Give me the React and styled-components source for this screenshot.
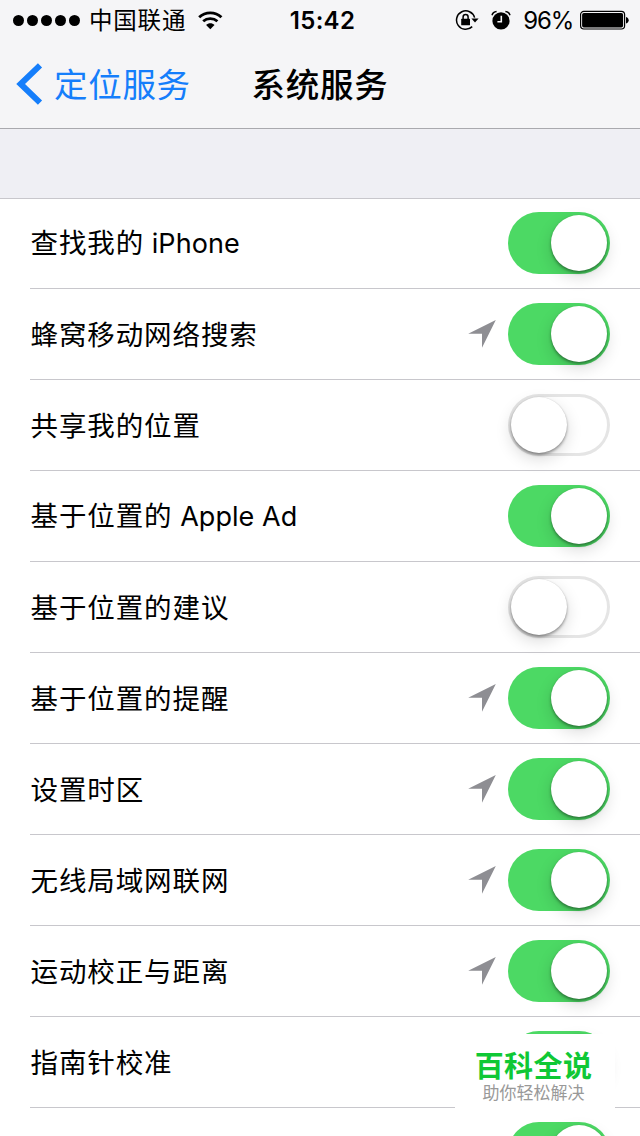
import React from "react";
import styled, { createGlobalStyle, css } from "styled-components";

const Global = createGlobalStyle`
  * { box-sizing: border-box; }
  html, body { margin: 0; padding: 0; }
  body {
    width: 640px;
    height: 1136px;
    overflow: hidden;
    background: #fff;
    color: #000;
    font-family: Inter, "Noto Sans CJK SC", sans-serif;
  }
`;

const Screen = styled.div`
  position: relative;
  width: 640px;
  height: 1136px;
  overflow: hidden;
  background: #efeff4;
`;

const Header = styled.header`
  height: 129px;
  background: #f5f5f7;
  border-bottom: 1px solid #a9a9ae;
`;

const StatusBar = styled.div`
  display: grid;
  grid-template-columns: 1fr auto 1fr;
  align-items: center;
  height: 40px;
  padding: 0 11px 0 13px;
`;

const StatusGroup = styled.div`
  display: flex;
  align-items: center;
  justify-content: ${(p) => (p.$end ? "flex-end" : "flex-start")};
`;

const Signal = styled.div`
  display: flex;
  gap: 3px;
  margin-right: 9px;
`;

const Dot = styled.i`
  width: 11px;
  height: 11px;
  border-radius: 50%;
  background: #000;
`;

const Carrier = styled.span`
  font-size: 23.5px;
  line-height: 38px;
  padding-top: 2px;
  letter-spacing: 0.8px;
  margin-right: 12px;
`;

const Clock = styled.span`
  font-size: 24px;
  font-weight: 600;
  line-height: 38px;
  padding: 2px 0 0 3px;
  letter-spacing: 0.3px;
`;

const Percent = styled.span`
  font-size: 24px;
  line-height: 38px;
  padding-top: 1px;
  letter-spacing: -1.2px;
  margin: 0 7px 0 12px;
`;

const Gap = styled.span`
  width: 12px;
`;

const NavBar = styled.nav`
  display: grid;
  grid-template-columns: 1fr auto 1fr;
  align-items: center;
  height: 88px;
  padding: 0 16px;
`;

const Back = styled.a`
  display: flex;
  align-items: center;
  gap: 11px;
  color: #157efb;
  font-size: 33.5px;
  line-height: 50px;
  letter-spacing: 0.7px;
`;

const BackText = styled.span`
  padding-top: 2px;
`;

const Title = styled.h1`
  margin: 0;
  padding-top: 2px;
  font-size: 33.5px;
  font-weight: 500;
  line-height: 50px;
  letter-spacing: 0.7px;
`;

const List = styled.ul`
  list-style: none;
  margin: 69px 0 0;
  padding: 0 0 0 30px;
  height: 938px;
  background: #fff;
  box-shadow: inset 0 1px #c8c7cc;
`;

const Row = styled.li`
  display: flex;
  align-items: center;
  height: 91px;
  padding-right: 30px;
  border-bottom: 1px solid #c8c7cc;
`;

const Label = styled.span`
  flex: 1;
  padding: 1px 0 0 0.5px;
  font-size: 27.5px;
  line-height: 40px;
  letter-spacing: 0.9px;
  white-space: pre;
`;

const Latin = styled.span`
  font-size: 27px;
  letter-spacing: 0.05px;
`;

const Track = styled.span`
  display: flex;
  align-items: center;
  width: 102px;
  height: 62px;
  margin-left: 12px;
  padding: 0 3px;
  border-radius: 31px;
  ${(p) =>
    p.$on
      ? css`
          justify-content: flex-end;
          background: #4cd964;
        `
      : css`
          justify-content: flex-start;
          background: #fff;
          box-shadow: inset 0 0 0 3px #e5e5e5;
        `}
`;

const Knob = styled.span`
  width: 56px;
  height: 56px;
  border-radius: 50%;
  background: #fff;
  box-shadow: 0 6px 16px rgba(0, 0, 0, 0.15), 0 2px 3px rgba(0, 0, 0, 0.36),
    0 0 1px rgba(0, 0, 0, 0.15);
`;

const Watermark = styled.aside`
  position: absolute;
  left: 455px;
  top: 1034px;
  width: 160px;
  height: 77px;
  padding: 16px 3px 0 0;
  background: #fff;
  text-align: center;
`;

const Brand = styled.div`
  color: #0fc835;
  font-size: 29px;
  font-weight: 700;
  line-height: 34px;
  letter-spacing: 0.4px;
`;

const Slogan = styled.div`
  color: #999;
  font-size: 17px;
  line-height: 19px;
`;

const Wifi = () => (
  <svg width="25" height="20" viewBox="0 0 25 20" fill="none" stroke="#000">
    <path d="M1.2 7.2C7.3 1.4 17.3 1.4 23.4 7.2" strokeWidth="2.9" />
    <path d="M5.2 11.3C9.1 7.8 15.5 7.8 19.4 11.3" strokeWidth="2.8" />
    <path d="M12.3 19.2l-4.2-4.3c2.3-2.1 6.1-2.1 8.4 0z" fill="#000" stroke="none" />
  </svg>
);

const RotationLock = () => (
  <svg width="24" height="22" viewBox="0 0 24 22" fill="none" stroke="#000">
    <path d="M19.6 8.6A9.2 9.2 0 1 0 17.2 17.6" strokeWidth="1.5" />
    <path d="M16.4 9.6h7.2l-3.6 4z" fill="#000" stroke="none" />
    <rect x="6.2" y="9.8" width="8.8" height="6.4" rx=".5" fill="#000" stroke="none" />
    <path d="M8.1 10V7.9a2.5 2.5 0 0 1 5 0V10" strokeWidth="1.5" />
  </svg>
);

const Alarm = () => (
  <svg width="20" height="20" viewBox="0 0 20 20" fill="none" stroke="#000">
    <circle cx="10" cy="10.9" r="8.6" fill="#000" stroke="none" />
    <path d="M1 5.2C1.5 3.2 3.3 1.6 5.6 1.4M19 5.2C18.5 3.2 16.7 1.6 14.4 1.4" strokeWidth="1.5" />
    <path d="M10.3 5.7v6H6.4" stroke="#f5f5f7" strokeWidth="1.6" />
  </svg>
);

const Battery = () => (
  <svg width="49" height="20" viewBox="0 0 49 20">
    <rect x=".6" y="1.4" width="44" height="17.6" rx="3.2" fill="none" stroke="#000" strokeWidth="1.2" />
    <rect x="2.1" y="2.9" width="41" height="14.6" rx="1.8" />
    <path d="M46 6.9c3.6.8 3.6 5.8 0 6.6z" />
  </svg>
);

const Chevron = () => (
  <svg width="27" height="42" viewBox="0 0 27 42" fill="none">
    <path d="M24 2.3L4.6 21 24 39.7" stroke="#157efb" strokeWidth="6" />
  </svg>
);

const LocationArrow = () => (
  <svg width="28" height="28" viewBox="0 0 28 28">
    <path d="M27.8 0L.2 13.8H14v14z" fill="#8e8e93" />
  </svg>
);

const services = [
  { name: "查找我的", latin: " iPhone", on: true },
  { name: "蜂窝移动网络搜索", on: true, used: true },
  { name: "共享我的位置", on: false },
  { name: "基于位置的", latin: " Apple Ad", on: true },
  { name: "基于位置的建议", on: false },
  { name: "基于位置的提醒", on: true, used: true },
  { name: "设置时区", on: true, used: true },
  { name: "无线局域网联网", on: true, used: true },
  { name: "运动校正与距离", on: true, used: true },
  { name: "指南针校准", on: true },
  { name: "", on: true },
];

export default function App() {
  return (
    <Screen>
      <Global />
      <Header>
        <StatusBar>
          <StatusGroup>
            <Signal>
              {[0, 1, 2, 3, 4].map((i) => (
                <Dot key={i} />
              ))}
            </Signal>
            <Carrier>中国联通</Carrier>
            <Wifi />
          </StatusGroup>
          <Clock>15:42</Clock>
          <StatusGroup $end>
            <RotationLock />
            <Gap />
            <Alarm />
            <Percent>96%</Percent>
            <Battery />
          </StatusGroup>
        </StatusBar>
        <NavBar>
          <Back>
            <Chevron />
            <BackText>定位服务</BackText>
          </Back>
          <Title>系统服务</Title>
        </NavBar>
      </Header>
      <List>
        {services.map((s, i) => (
          <Row key={i}>
            <Label>
              {s.name}
              {s.latin && <Latin>{s.latin}</Latin>}
            </Label>
            {s.used && <LocationArrow />}
            <Track $on={s.on}>
              <Knob />
            </Track>
          </Row>
        ))}
      </List>
      <Watermark>
        <Brand>百科全说</Brand>
        <Slogan>助你轻松解决</Slogan>
      </Watermark>
    </Screen>
  );
}
